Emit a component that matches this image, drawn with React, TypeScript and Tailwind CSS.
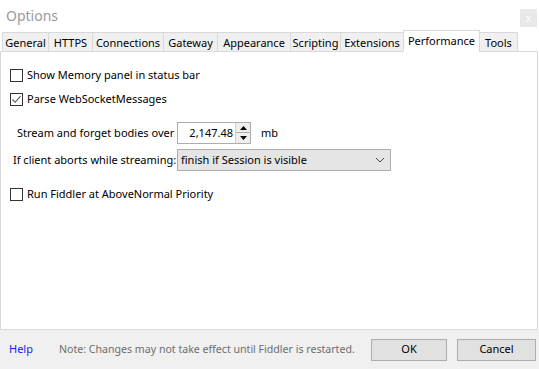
import React from "react";

const font = { fontFamily: '"Noto Sans", "Open Sans", sans-serif' };

function Box({ checked }: { checked?: boolean }) {
  return (
    <div className="w-[13px] h-[13px] border border-[#333333] bg-white flex items-center justify-center shrink-0">
      {checked && (
        <svg width="11" height="11" viewBox="0 0 11 11">
          <path d="M1.5 5.5 L4.2 8.3 L9.5 2.2" fill="none" stroke="#555555" strokeWidth="1.1" />
        </svg>
      )}
    </div>
  );
}

const tabs: { label: string; w: string }[] = [
  { label: "General", w: "w-[47px]" },
  { label: "HTTPS", w: "w-[45px]" },
  { label: "Connections", w: "w-[72px]" },
  { label: "Gateway", w: "w-[55px]" },
  { label: "Appearance", w: "w-[74px]" },
  { label: "Scripting", w: "w-[51px]" },
  { label: "Extensions", w: "w-[64px]" },
];

export default function App() {
  return (
    <div
      className="w-[539px] h-[369px] bg-white flex flex-col overflow-hidden text-[11px] text-black whitespace-nowrap"
      style={font}
    >
      {/* title bar */}
      <div className="h-[31px] shrink-0 flex items-start justify-between">
        <div className="pl-[6px] pt-[5px] text-[14px] text-[#9a9a9a]">Options</div>
        <div className="mt-[9px] mr-[2px] w-[17px] h-[18px] bg-[#e8e8e8] text-white text-[10px] flex items-center justify-center leading-none">
          x
        </div>
      </div>
      {/* tabs */}
      <div className="h-[21px] shrink-0 flex items-end pl-[2px] relative z-10">
        {tabs.map((t) => (
          <div
            key={t.label}
            className={`${t.w} h-[20px] -mr-px border border-[#d9d9d9] bg-[#f0f0f0] flex items-center justify-center leading-none`}
          >
            {t.label}
          </div>
        ))}
        <div className="w-[77px] h-[22px] -mr-px border border-[#d9d9d9] border-b-white bg-white flex items-start pt-[4px] justify-center leading-none">
          Performance
        </div>
        <div className="w-[39px] h-[20px] border border-[#d9d9d9] bg-[#f0f0f0] flex items-center justify-center leading-none">
          Tools
        </div>
      </div>
      {/* panel */}
      <div className="h-[279px] shrink-0 -mt-px mr-[1px] border border-[#d9d9d9] bg-white flex flex-col">
        <div className="mt-[17px] ml-[9px] flex items-center gap-[4px] h-[13px]">
          <Box />
          <span>Show Memory panel in status bar</span>
        </div>
        <div className="mt-[11px] ml-[9px] flex items-center gap-[4px] h-[13px]">
          <Box checked />
          <span>Parse WebSocketMessages</span>
        </div>
        <div className="mt-[16px] flex items-center h-[22px]">
          <span className="ml-[16px] w-[160px]">Stream and forget bodies over</span>
          <div className="w-[74px] h-[22px] border border-[#adadad] bg-white flex items-center">
            <span className="flex-1 text-right pr-[2px]">2,147.48</span>
            <div className="w-[15px] h-[20px] flex flex-col border-l border-[#d0d0d0]">
              <div className="h-[10px] bg-[#eeeeee] border-b border-[#adadad] flex items-center justify-center">
                <svg width="7" height="4" viewBox="0 0 7 4"><path d="M0 4 L3.5 0 L7 4 Z" fill="#000" /></svg>
              </div>
              <div className="h-[10px] bg-[#eeeeee] flex items-center justify-center">
                <svg width="7" height="4" viewBox="0 0 7 4"><path d="M0 0 L3.5 4 L7 0 Z" fill="#000" /></svg>
              </div>
            </div>
          </div>
          <span className="ml-[10px]">mb</span>
        </div>
        <div className="mt-[5px] flex items-center h-[22px]">
          <span className="ml-[12px] w-[164px]">If client aborts while streaming:</span>
          <div className="w-[214px] h-[22px] border border-[#adadad] bg-[#e5e5e5] flex items-center justify-between pl-[3px] pr-[5px]">
            <span>finish if Session is visible</span>
            <svg width="10" height="6" viewBox="0 0 10 6">
              <path d="M1 1 L5 5 L9 1" fill="none" stroke="#444" strokeWidth="1" />
            </svg>
          </div>
        </div>
        <div className="mt-[17px] ml-[9px] flex items-center gap-[4px] h-[13px]">
          <Box />
          <span>Run Fiddler at AboveNormal Priority</span>
        </div>
      </div>
      {/* footer */}
      <div className="flex-1 bg-[#f0f0f0] flex items-center">
        <span className="ml-[9px] text-[#1a1aff]">Help</span>
        <span className="ml-[26px] text-[#6d6d6d] text-[10.6px]">
          Note: Changes may not take effect until Fiddler is restarted.
        </span>
        <div className="ml-auto w-[76px] h-[22px] bg-[#e1e1e1] border border-[#adadad] flex items-center justify-center">
          OK
        </div>
        <div className="ml-[10px] mr-[3px] w-[79px] h-[22px] bg-[#e1e1e1] border border-[#adadad] flex items-center justify-center">
          Cancel
        </div>
      </div>
    </div>
  );
}
